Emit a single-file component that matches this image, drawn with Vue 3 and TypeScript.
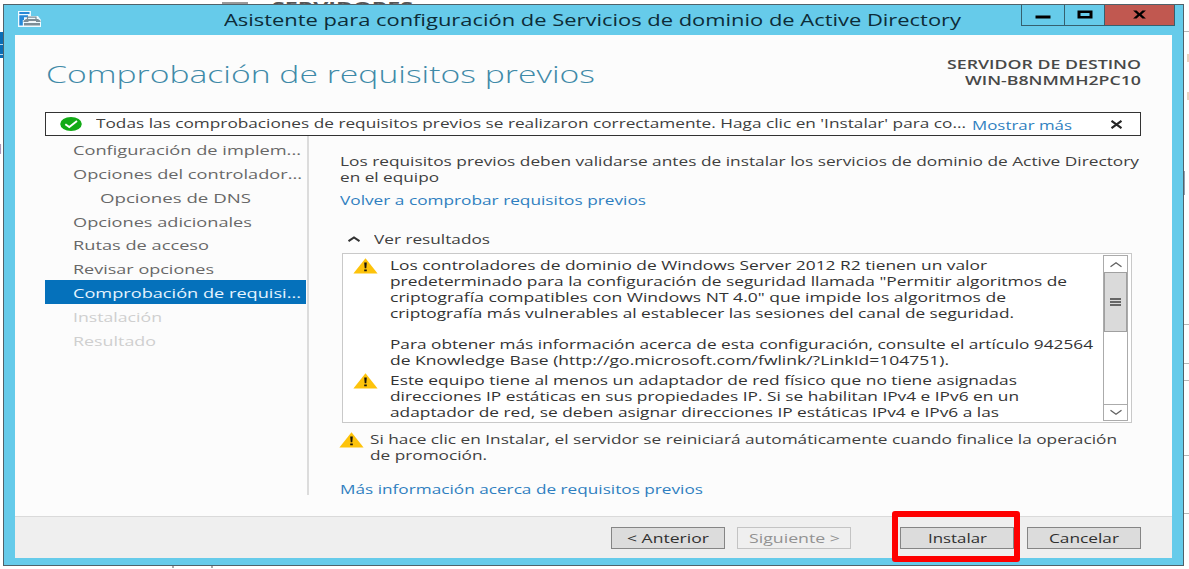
<script setup lang="ts">
interface Line { text: string; width: number }
interface Step extends Line { state?: string }

// Sets a line of text to a given width in pixels
const vFit = {
  mounted(el: HTMLElement, binding: { value: number }) {
    const natural = el.getBoundingClientRect().width
    if (!natural) return
    el.style.transform = `scaleX(${binding.value / natural})`
    el.style.marginRight = `${binding.value - natural}px`
  },
}

const steps: Step[] = [
  { text: 'Configuración de implem...', width: 228 },
  { text: 'Opciones del controlador...', width: 229 },
  { text: 'Opciones de DNS', width: 151, state: 'nested' },
  { text: 'Opciones adicionales', width: 179 },
  { text: 'Rutas de acceso', width: 136 },
  { text: 'Revisar opciones', width: 141 },
  { text: 'Comprobación de requisi...', width: 228, state: 'active' },
  { text: 'Instalación', width: 89, state: 'pending' },
  { text: 'Resultado', width: 83, state: 'pending' },
]

const warnings: Line[][] = [
  [
    { text: 'Los controladores de dominio de Windows Server 2012 R2 tienen un valor', width: 597 },
    { text: 'predeterminado para la configuración de seguridad llamada "Permitir algoritmos de', width: 677 },
    { text: 'criptografía compatibles con Windows NT 4.0" que impide los algoritmos de', width: 616 },
    { text: 'criptografía más vulnerables al establecer las sesiones del canal de seguridad.', width: 624 },
    { text: '', width: 0 },
    { text: 'Para obtener más información acerca de esta configuración, consulte el artículo 942564', width: 703 },
    { text: 'de Knowledge Base (http://go.microsoft.com/fwlink/?LinkId=104751).', width: 559 },
  ],
  [
    { text: 'Este equipo tiene al menos un adaptador de red físico que no tiene asignadas', width: 627 },
    { text: 'direcciones IP estáticas en sus propiedades IP. Si se habilitan IPv4 e IPv6 en un', width: 629 },
    { text: 'adaptador de red, se deben asignar direcciones IP estáticas IPv4 e IPv6 a las', width: 609 },
  ],
]
</script>

<template>
  <div class="desktop">
    <div class="behind-bar"></div>
    <div class="behind-title"><span v-fit="141">SERVIDORES</span></div>
    <div class="behind-selection"><i></i><i></i></div>
    <div class="behind-letter">d</div>
    <div class="behind-right">
      <i class="r1"></i><b class="r2"></b><b class="r3"></b><b class="r4"></b><i class="r5"></i><i class="r6"></i><i class="r7"></i><i class="r8"></i><i class="r9"></i>
    </div>
    <i class="tick t1"></i><i class="tick t2"></i>

    <main class="window">
      <header class="titlebar">
        <svg class="app-icon" viewBox="0 0 24 16">
          <path d="M0 0H13V5H20L23 9V16H0Z" fill="#eefaff" />
          <path d="M1.3 1H11.5V3H1.3ZM1.3 4.3H10V6.2H6V9H4.8V14.5H1.3Z" fill="#2589d8" />
          <path d="M9.5 8.2V6.2H18V8.2" fill="none" stroke="#7d8d96" stroke-width="1.2" />
          <path d="M5.5 9.8L8 8H20L22.5 9.8V11H5.5ZM6 12H22V14.6H6Z" fill="#7d8d96" />
          <path d="M10.5 10.6H18" stroke="#fff" stroke-width="1" />
        </svg>
        <h1><span v-fit="737">Asistente para configuración de Servicios de dominio de Active Directory</span></h1>
        <div class="controls">
          <div class="control"><svg viewBox="0 0 42 20"><path d="M13.5 10.5H28.5V13.5H13.5Z" /></svg></div>
          <div class="control max"><svg viewBox="0 0 39 20"><path fill-rule="evenodd" d="M12.5 5.5H27.5V13.5H12.5ZM15.5 8V11H24.5V8Z" /></svg></div>
          <div class="control close"><svg viewBox="0 0 70 20"><path d="M28.5 5.5H32L35 8.3L38 5.5H41.5L37 9.5L41.5 13.5H38L35 10.7L32 13.5H28.5L33 9.5Z" /></svg></div>
        </div>
      </header>

      <section class="client">
        <div class="heading">
          <h2><span v-fit="549">Comprobación de requisitos previos</span></h2>
          <div class="target">
            <div><span v-fit="194">SERVIDOR DE DESTINO</span></div>
            <div><span v-fit="176">WIN-B8NMMH2PC10</span></div>
          </div>
        </div>

        <div class="banner">
          <svg class="ok" viewBox="0 0 22 14">
            <ellipse cx="11" cy="7" rx="10.8" ry="6.9" fill="#12aa16" />
            <path d="M5.3 7.2L9.3 10L17 4" fill="none" stroke="#fff" stroke-width="1.9" />
          </svg>
          <span class="banner-text"><span v-fit="870">Todas las comprobaciones de requisitos previos se realizaron correctamente. Haga clic en 'Instalar' para co...</span></span>
          <a class="more"><span v-fit="100">Mostrar más</span></a>
          <svg class="dismiss" viewBox="0 0 13 9"><path d="M1.5 .8L11.5 8.2M11.5 .8L1.5 8.2" stroke="#252525" stroke-width="2.1" /></svg>
        </div>

        <div class="body">
          <nav>
            <div v-for="s in steps" :key="s.text" class="step" :class="s.state"><span v-fit="s.width">{{ s.text }}</span></div>
          </nav>
          <article>
            <p class="intro"><span v-fit="799">Los requisitos previos deben validarse antes de instalar los servicios de dominio de Active Directory</span></p>
            <p class="intro"><span v-fit="99">en el equipo</span></p>
            <p class="again"><a><span v-fit="306">Volver a comprobar requisitos previos</span></a></p>
            <div class="expander">
              <svg viewBox="0 0 14 6"><path d="M1.5 5.2L7 1.5L12.5 5.2" fill="none" stroke="#333" stroke-width="2" /></svg>
              <span v-fit="116">Ver resultados</span>
            </div>
            <div class="results">
              <div class="messages">
                <div v-for="(w, i) in warnings" :key="i" class="warning">
                  <svg class="alert" viewBox="0 0 25 16"><path d="M12.5 .3L24.6 15.6H.4Z" fill="#fdc30b" /><path d="M11.2 4.5H13.8L13.3 10.3H11.7ZM11.2 11.4H13.8V13.2H11.2Z" fill="#17130a" /></svg>
                  <div>
                    <p v-for="(l, j) in w" :key="j"><span v-fit="l.width">{{ l.text }}</span></p>
                  </div>
                </div>
              </div>
              <div class="scrollbar">
                <div class="arrow"><svg viewBox="0 0 14 7"><path d="M1.5 5.7L7 1.7L12.5 5.7" /></svg></div>
                <div class="thumb"><i></i><i></i><i></i></div>
                <div class="arrow down"><svg viewBox="0 0 14 7"><path d="M1.5 1.3L7 5.3L12.5 1.3" /></svg></div>
              </div>
            </div>
            <div class="notice">
              <svg class="alert" viewBox="0 0 25 16"><path d="M12.5 .3L24.6 15.6H.4Z" fill="#fdc30b" /><path d="M11.2 4.5H13.8L13.3 10.3H11.7ZM11.2 11.4H13.8V13.2H11.2Z" fill="#17130a" /></svg>
              <div>
                <p><span v-fit="747">Si hace clic en Instalar, el servidor se reiniciará automáticamente cuando finalice la operación</span></p>
                <p><span v-fit="117">de promoción.</span></p>
              </div>
            </div>
            <p class="info"><a><span v-fit="363">Más información acerca de requisitos previos</span></a></p>
          </article>
        </div>

        <footer>
          <button class="prev"><span v-fit="82">&lt; Anterior</span></button>
          <button class="next" disabled><span v-fit="91">Siguiente &gt;</span></button>
          <button class="install"><span v-fit="59">Instalar</span></button>
          <button class="cancel"><span v-fit="70">Cancelar</span></button>
        </footer>
      </section>
    </main>
    <div class="highlight"></div>
  </div>
</template>

<style>
body { margin: 0; background: #fff; overflow: hidden; }
</style>

<style scoped>
* { box-sizing: border-box; }
.desktop { position: relative; width: 1189px; height: 569px; padding: 4px 0 0 3px; overflow: hidden; background: #fff; font: 12.7px/16px "Open Sans", "Noto Sans", sans-serif; color: #404040; }
p, h1, h2 { margin: 0; font-weight: 400; white-space: nowrap; }
span { display: inline-block; transform-origin: 0 50%; white-space: nowrap; }
a { color: #2f7fc0; }
svg { display: block; flex: none; }

.window { width: 1181px; height: 562px; border: 1px solid #50626a; background: #66cbea; padding: 0 11px 7px 11px; }
.titlebar { display: flex; height: 30px; align-items: flex-start; }
.app-icon { width: 24px; height: 16px; margin: 6px 0 0 3px; }
h1 { margin: 4px 0 0 182px; width: 797px; font-size: 16px; line-height: 22px; color: #0d2c38; }
.controls { display: flex; width: 154px; height: 21px; border: 1px solid #35606f; border-top: 0; margin-right: -3px; flex: none; }
.control { width: 42px; height: 20px; flex: none; }
.control svg { width: 100%; height: 20px; fill: #000; }
.max { width: 40px; border-left: 1px solid #35606f; }
.close { width: 70px; border-left: 1px solid #35606f; background: #c15850; }

.client { display: flex; flex-direction: column; width: 1157px; height: 523px; background: #fcfcfc; }
.heading { display: flex; justify-content: space-between; height: 77px; padding: 19px 31px 0 31px; }
h2 { font-size: 24.5px; line-height: 40px; font-weight: 300; color: #3f8aa8; }
.target { padding-top: 3px; font-weight: 600; text-align: right; font-size: 12.4px; color: #484848; }
.target div { height: 16px; white-space: nowrap; }

.banner { display: flex; width: 1096px; height: 24px; margin-left: 30px; border: 1px solid #333; background: #fff; flex: none; }
.ok { width: 22px; height: 14px; margin: 4px 0 0 14px; }
.banner-text { width: 876px; margin: 2px 0 0 14px; }
.more { width: 138px; margin-top: 4px; }
.dismiss { width: 13px; height: 9px; margin-top: 7px; }

.body { display: flex; height: 380px; padding-left: 30px; }
nav { width: 263.5px; height: 359px; padding-top: 1px; border-right: 2px solid #dcdcdc; flex: none; }
.step { width: 260.5px; height: 23.85px; padding-left: 27.5px; line-height: 27px; color: #686868; white-space: nowrap; }
.nested { padding-left: 54.5px; }
.active { background: #0571bb; color: #e6f4ff; }
.pending { color: #cfcfcf; }

article { width: 840px; padding: 16.5px 0 0 31.5px; }
.again { margin-top: 7.5px; }
.expander { display: flex; align-items: center; margin-top: 23px; height: 16px; }
.expander svg { width: 14px; height: 6px; margin: 0 13px 0 7px; }
.results { display: flex; justify-content: space-between; width: 790px; height: 170px; margin: 6px 0 0 2px; padding: 1px 3px 1px 0; border: 1px solid #c9c9c9; background: #fff; color: #333; }
.warning { display: flex; padding-left: 10px; margin-top: 2px; margin-bottom: 4px; }
.warning p { height: 15.9px; }
.alert { width: 25px; height: 16px; }
.warning .alert { margin: 1px 12px 0 0; }
.scrollbar { display: flex; flex-direction: column; width: 25px; height: 166px; border: 1px solid #ababab; }
.arrow { display: flex; align-items: center; justify-content: center; height: 16px; flex: none; }
.arrow svg { width: 14px; height: 7px; fill: none; stroke: #606060; stroke-width: 1.3; }
.arrow.down { margin-top: auto; border-top: 1px solid #ababab; }
.thumb { display: flex; flex-direction: column; align-items: center; justify-content: center; gap: 1px; height: 60px; border: 1px solid #a0a0a0; background: #dadada; }
.thumb i { width: 11px; height: 2px; background: #666; }
.notice { display: flex; margin-top: 8px; }
.notice .alert { margin: 1px 6px 0 -1px; }
.info { margin-top: 18px; }

footer { display: flex; height: 42px; margin-top: auto; padding: 10px 30px 0 596px; border-top: 1px solid #dadada; background: #efefef; flex: none; }
button { display: flex; align-items: center; justify-content: center; width: 114px; height: 22px; padding: 0; border: 1px solid #858585; border-radius: 0; background: #dcdcdc; font: inherit; color: #303030; flex: none; }
.next { margin-left: 12px; border-color: #c3c3c3; background: #efefef; color: #929292; }
.install { margin-left: 49px; }
.cancel { margin-left: 13px; }

.highlight { position: absolute; left: 892px; top: 511px; width: 128px; height: 51px; border: 6px solid #fe0000; border-radius: 3px; }

.behind-bar { position: absolute; left: 222px; top: 2px; width: 26px; height: 2px; background: #999; }
.behind-title { position: absolute; left: 272px; top: 1px; width: 142px; height: 3px; overflow: hidden; font-weight: 700; font-size: 14px; line-height: 18px; color: #555; }
.behind-title span { display: block; width: max-content; margin-top: -3px; }
.behind-selection { position: absolute; left: 0; top: 32px; width: 3px; height: 26px; background: #0a6eb6; }
.behind-selection i { display: block; height: 1px; margin-top: 9px; background: #b8d8ee; }
.behind-selection i:first-child { margin-top: 12px; }
.behind-letter { position: absolute; left: -6px; top: 141px; width: 9px; overflow: hidden; color: #a06a42; }
.behind-right i, .behind-right b { position: absolute; left: 1184px; width: 5px; height: 1px; background: #b8b8b8; }
.behind-right b { left: 1187px; width: 2px; height: 8px; background: #ead3c0; }
.behind-right .r1 { top: 31px; }
.behind-right .r2 { top: 54px; }
.behind-right .r3 { top: 92px; }
.behind-right .r4 { top: 171px; height: 24px; left: 1184px; width: 1px; background: #91a0b0; }
.behind-right .r5 { top: 324px; }
.behind-right .r6 { top: 363px; }
.behind-right .r7 { top: 380px; }
.behind-right .r8 { top: 455px; }
.behind-right .r9 { top: 513px; }
.tick { position: absolute; top: 566px; width: 2px; height: 2px; background: #aaa; }
.t1 { left: 172px; }
.t2 { left: 211px; }
</style>
